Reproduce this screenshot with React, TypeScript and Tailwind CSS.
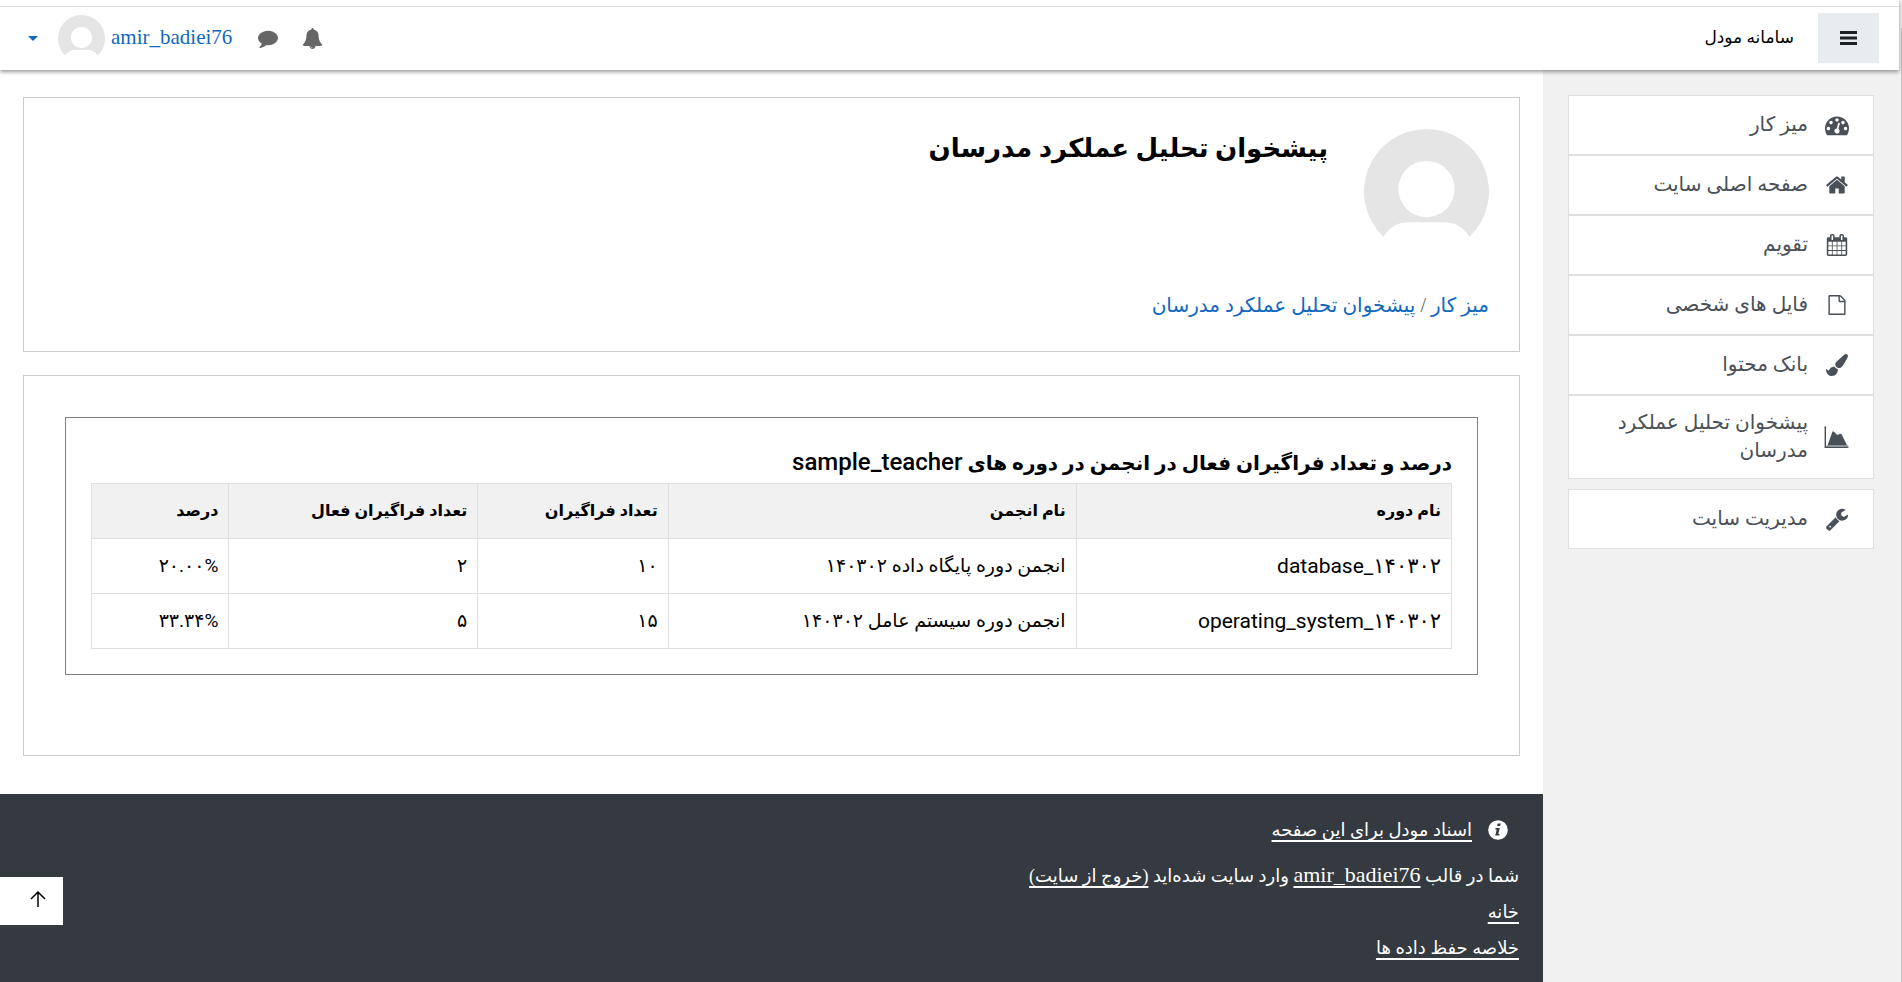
import React from "react";

type IconProps = { d: string; className?: string };

const Icon = ({ d, className }: IconProps) => (
  <svg viewBox="0 0 1792 1792" className={className} fill="currentColor" aria-hidden="true">
    <path d={d} />
  </svg>
);

const HOME =
  "M1472 992v480q0 26-19 45t-45 19h-384v-384h-256v384h-384q-26 0-45-19t-19-45v-480q0-1 .5-3t.5-3l575-474 575 474q1 2 1 6zm223-69l-62 74q-8 9-21 11h-3q-13 0-21-7l-692-577-692 577q-12 8-24 7-13-2-21-11l-62-74q-8-10-7-23.5t11-21.5l719-599q32-26 76-26t76 26l244 204v-195q0-14 9-23t23-9h192q14 0 23 9t9 23v408l219 182q10 8 11 21.5t-7 23.5z";
const GAUGE =
  "M384 1152q0-53-37.5-90.5t-90.5-37.5-90.5 37.5-37.5 90.5 37.5 90.5 90.5 37.5 90.5-37.5 37.5-90.5zm192-448q0-53-37.5-90.5t-90.5-37.5-90.5 37.5-37.5 90.5 37.5 90.5 90.5 37.5 90.5-37.5 37.5-90.5zm428 481l101-382q6-26-7.5-48.5t-38.5-29.5-48 6.5-30 39.5l-101 382q-60 5-107 43.5t-63 98.5q-20 77 20 146t117 89 146-20 89-117q16-60-6-117t-72-91zm660-33q0-53-37.5-90.5t-90.5-37.5-90.5 37.5-37.5 90.5 37.5 90.5 90.5 37.5 90.5-37.5 37.5-90.5zm-640-640q0-53-37.5-90.5t-90.5-37.5-90.5 37.5-37.5 90.5 37.5 90.5 90.5 37.5 90.5-37.5 37.5-90.5zm448 192q0-53-37.5-90.5t-90.5-37.5-90.5 37.5-37.5 90.5 37.5 90.5 90.5 37.5 90.5-37.5 37.5-90.5zm320 448q0 261-141 483-19 29-54 29h-1402q-35 0-54-29-141-221-141-483 0-182 71-348t191-286 286-191 348-71 348 71 286 191 191 286 71 348z";
const CALENDAR =
  "M192 1664h288v-288h-288v288zm352 0h320v-288h-320v288zm-352-352h288v-320h-288v320zm352 0h320v-320h-320v320zm-352-384h288v-288h-288v288zm736 736h320v-288h-320v288zm-384-736h320v-288h-320v288zm768 736h288v-288h-288v288zm-384-352h320v-320h-320v320zm-352-864v-288q0-13-9.5-22.5t-22.5-9.5h-64q-13 0-22.5 9.5t-9.5 22.5v288q0 13 9.5 22.5t22.5 9.5h64q13 0 22.5-9.5t9.5-22.5zm736 864h288v-320h-288v320zm-384-384h320v-288h-320v288zm384 0h288v-288h-288v288zm32-480v-288q0-13-9.5-22.5t-22.5-9.5h-64q-13 0-22.5 9.5t-9.5 22.5v288q0 13 9.5 22.5t22.5 9.5h64q13 0 22.5-9.5t9.5-22.5zm384-64v1280q0 52-38 90t-90 38h-1408q-52 0-90-38t-38-90v-1280q0-52 38-90t90-38h128v-96q0-66 47-113t113-47h64q66 0 113 47t47 113v96h384v-96q0-66 47-113t113-47h64q66 0 113 47t47 113v96h128q52 0 90 38t38 90z";
const FILE =
  "M1596 380q28 28 48 76t20 88v1152q0 40-28 68t-68 28h-1344q-40 0-68-28t-28-68v-1600q0-40 28-68t68-28h896q40 0 88 20t76 48zm-444-244v376h376q-10-29-22-41l-313-313q-12-12-41-22zm384 1528v-1024h-416q-40 0-68-28t-28-68v-416h-768v1536h1280z";
const BRUSH =
  "M1615 0q70 0 122.5 46.5t52.5 116.5q0 63-45 151-332 629-465 752-97 91-218 91-126 0-216.5-92.5t-90.5-219.5q0-128 92-212l638-579q59-54 130-54zm-909 1034q39 76 106.5 130t150.5 76l1 71q4 213-129.5 347t-348.5 134q-123 0-218-46.5t-152.5-127.5-86.5-183-29-220q7 5 41 30t62 44.5 59 36.5 46 17q41 0 55-37 25-66 57.5-112.5t69.5-76 88-47.5 103-25.5 125-10.5z";
const WRENCH =
  "M448 1472q0-26-19-45t-45-19-45 19-19 45 19 45 45 19 45-19 19-45zm644-420l-682 682q-37 37-90 37-52 0-91-37l-106-108q-38-36-38-90 0-53 38-91l681-681q39 98 114.5 173.5t173.5 114.5zm634-435q0 39-23 106-47 134-164.5 217.5t-258.5 83.5q-185 0-316.5-131.5t-131.5-316.5 131.5-316.5 316.5-131.5q58 0 121.5 16.5t107.5 46.5q16 11 16 28t-16 28l-293 169v224l193 107q5-3 79-48.5t135.5-81 70.5-35.5q15 0 23.5 10t8.5 25z";
const COMMENT =
  "M1792 896q0 174-120 321.5t-326 233-450 85.5q-70 0-145-8-198 175-460 242-49 14-114 22-17 2-30.5-9t-17.5-29v-1q-3-4-.5-12t2-10 4.5-9.5l6-9 7-8.5 8-9q7-8 31-34.5t34.5-38 31-39.5 32.5-51 27-59 26-76q-157-89-247.5-220t-90.5-281q0-130 71-248.5t191-204.5 286-136.5 348-50.5q244 0 450 85.5t326 233 120 321.5z";
const BELL =
  "M912 1696q0-16-16-16-59 0-101.5-42.5t-42.5-101.5q0-16-16-16t-16 16q0 73 51.5 124.5t124.5 51.5q16 0 16-16zm816-288q0 52-38 90t-90 38h-448q0 106-75 181t-181 75-181-75-75-181h-448q-52 0-90-38t-38-90q50-42 91-88t85-119.5 74.5-158.5 50-206 19.5-260q0-152 117-282.5t307-158.5q-8-19-8-39 0-40 28-68t68-28 68 28 28 68q0 20-8 39 190 28 307 158.5t117 282.5q0 139 19.5 260t50 206 74.5 158.5 85 119.5 91 88z";

const ChartIcon = () => (
  <svg viewBox="0 0 25 22" className="h-[22px] w-[25px]" fill="currentColor" aria-hidden="true">
    <path d="M0 1.500L1.300 0L2.600 1.500H2V20.300H23.500V19.500L25 21L23.500 22H.6V1.500Z" />
    <path d="M2.500 19.200H24V21H2.500Z" fill="#92969c" />
    <path d="M3.600 19.300L8.500 5.500Q9 4.800 9.700 5.600L13.200 9L16.300 7.800Q17.200 7.600 17.700 8.600L23 19.300Z" />
  </svg>
);

const Avatar = ({ className }: { className: string }) => (
  <svg viewBox="0 0 100 100" className={className} aria-hidden="true">
    <path
      fill="#e5e5e5"
      fillRule="evenodd"
      d="M50 0A50 50 0 0 1 84.500 86.200Q77 74.500 65 74.500H35Q23 74.500 15.500 86.200A50 50 0 0 1 50 0ZM50 25.500A22.500 22.500 0 1 0 50 70.500A22.500 22.500 0 1 0 50 25.500Z"
    />
  </svg>
);

const NAV = [
  { label: "میز کار", icon: <Icon d={GAUGE} className="h-6 w-6" /> },
  { label: "صفحه اصلی سایت", icon: <Icon d={HOME} className="h-6 w-6" /> },
  { label: "تقویم", icon: <Icon d={CALENDAR} className="h-[22px] w-[22px]" /> },
  { label: "فایل های شخصی", icon: <Icon d={FILE} className="h-5 w-5" /> },
  { label: "بانک محتوا", icon: <Icon d={BRUSH} className="h-[22px] w-[22px]" /> },
  { label: "پیشخوان تحلیل عملکرد مدرسان", icon: <ChartIcon /> },
];

const HEADS = ["نام دوره", "نام انجمن", "تعداد فراگیران", "تعداد فراگیران فعال", "درصد"];
const ROWS = [
  ["database_۱۴۰۳۰۲", "انجمن دوره پایگاه داده ۱۴۰۳۰۲", "۱۰", "۲", "۲۰.۰۰%"],
  ["operating_system_۱۴۰۳۰۲", "انجمن دوره سیستم عامل ۱۴۰۳۰۲", "۱۵", "۵", "۳۳.۳۴%"],
];

const NavItem = ({ label, icon }: { label: string; icon: React.ReactNode }) => (
  <li className="flex min-h-15 border border-[#dfdfdf] bg-white">
    <a href="#" className="flex w-full items-center gap-4 pt-3 pr-6 pb-[13px] pl-8 text-[#495057]">
      <span className="flex w-[25px] shrink-0 justify-center">{icon}</span>
      <span className="pb-px text-xl leading-7">{label}</span>
    </a>
  </li>
);

export default function App() {
  return (
    <div
      dir="rtl"
      className="relative flex min-h-screen flex-col bg-[#f1f1f1] font-['Liberation_Serif','DejaVu_Sans',serif] text-black"
    >
      <div className="absolute top-7 right-0 bottom-0 w-px bg-[#c1c1c1]" />
      <header className="relative z-10 mr-[3px] border-t-[6px] border-white bg-white shadow-[0_2px_4px_rgba(0,0,0,0.4)]">
        <div className="flex h-16 items-center border-t border-[#dfdfdf] pr-5 pb-px pl-7">
          <button type="button" aria-label="منو" className="flex h-[50px] w-[61px] items-center justify-center bg-[#e9ecef]">
            <svg viewBox="0 0 17 14" className="h-[14px] w-[17px]" fill="#1d2125" aria-hidden="true">
              <path d="M0 0h17v3H0zM0 5.500h17v3H0zM0 11h17v3H0z" />
            </svg>
          </button>
          <a href="#" className="mr-6 text-[17px]">سامانه مودل</a>
          <div className="mr-auto flex items-center text-[#666]">
            <button type="button" aria-label="اعلان‌ها" className="ml-6"><Icon d={BELL} className="h-[21px] w-[21px]" /></button>
            <button type="button" aria-label="پیام‌ها" className="ml-[26px]"><Icon d={COMMENT} className="h-5 w-5" /></button>
            <button type="button" className="flex items-center gap-[6px] text-[21px] text-[#1068bf]">
              <span dir="ltr">amir_badiei76</span>
              <Avatar className="h-[47px] w-[47px]" />
              <svg viewBox="0 0 10 5" className="mr-[14px] h-[5px] w-[10px]" fill="currentColor" aria-hidden="true">
                <path d="M0 0h10L5 5z" />
              </svg>
            </button>
          </div>
        </div>
      </header>

      <div className="flex grow">
        <aside className="w-[359px] shrink-0 pt-[25px] pr-7 pl-[25px]">
          <nav>
            <ul>{NAV.map((n) => <NavItem key={n.label} {...n} />)}</ul>
            <ul className="mt-[10px]">
              <NavItem label="مدیریت سایت" icon={<Icon d={WRENCH} className="h-6 w-6" />} />
            </ul>
          </nav>
        </aside>

        <div className="flex min-w-0 grow flex-col bg-white">
          <main className="px-[23px] pt-[27px] pb-[38px]">
            <section className="border border-[#ccc] px-[30px] pt-[31px] pb-8">
              <div className="flex h-[162px] gap-9">
                <Avatar className="h-[125px] w-[125px]" />
                <h1 className="text-[26px] leading-10 font-bold">پیشخوان تحلیل عملکرد مدرسان</h1>
              </div>
              <nav className="text-xl leading-7 text-[#666]">
                <a href="#" className="text-[#1068bf]">میز کار</a>
                {" / "}
                <a href="#" className="text-[#1068bf]">پیشخوان تحلیل عملکرد مدرسان</a>
              </nav>
            </section>

            <section className="mt-[23px] border border-[#ccc] px-[41px] pt-[41px] pb-20">
              <div className="border border-[#808080] px-[25px] pt-6 pb-[25px] font-[Roboto,'DejaVu_Sans',sans-serif]">
                <h2 className="text-xl leading-10 font-bold">
                  درصد و تعداد فراگیران فعال در انجمن در دوره های{" "}
                  <span className="text-2xl leading-10 font-medium">sample_teacher</span>
                </h2>
                <table className="w-full table-fixed border-collapse text-right">
                  <colgroup>
                    <col className="w-[27.6%]" />
                    <col className="w-[30%]" />
                    <col className="w-[14%]" />
                    <col className="w-[18.3%]" />
                    <col className="w-[10.1%]" />
                  </colgroup>
                  <thead>
                    <tr className="h-[55px] bg-[#f1f1f1]">
                      {HEADS.map((h) => <th key={h} className="border border-[#dfdfdf] px-[10px] text-base font-bold">{h}</th>)}
                    </tr>
                  </thead>
                  <tbody>
                    {ROWS.map((r) => (
                      <tr key={r[0]} className="h-[55px]">
                        {r.map((c, i) => (
                          <td key={i} className="border border-[#dfdfdf] px-[10px] text-[19px] leading-8">
                            {i === 0 ? (
                              <bdi dir="ltr" className="text-[21px]">{c}</bdi>
                            ) : (
                              <bdi dir={i === 4 ? "ltr" : "rtl"}>{c}</bdi>
                            )}
                          </td>
                        ))}
                      </tr>
                    ))}
                  </tbody>
                </table>
              </div>
            </section>
          </main>

          <footer className="relative grow bg-[#343a40] px-6 pt-[18px] text-lg leading-9 text-white">
            <p className="mb-[9px] flex items-center gap-4 pr-[11px]">
              <svg viewBox="0 0 20 20" className="h-5 w-5" aria-hidden="true">
                <circle cx="10" cy="10" r="9.800" fill="#fff" />
                <path fill="#343a40" d="M9.700 3.500h3l-.6 2.600h-3zM7.600 8h4.200l-1.500 6h1.300l-.5 1.600H7.200L8.700 9.500H7.200z" />
              </svg>
              <a href="#" className="underline decoration-2 underline-offset-4">اسناد مودل برای این صفحه</a>
            </p>
            <p>
              شما در قالب <a href="#" className="text-[22px] underline decoration-2 underline-offset-4">amir_badiei76</a> وارد سایت شده‌اید{" "}
              <a href="#" className="underline decoration-2 underline-offset-4">(خروج از سایت)</a>
            </p>
            <p><a href="#" className="underline decoration-2 underline-offset-4">خانه</a></p>
            <p><a href="#" className="underline decoration-2 underline-offset-4">خلاصه حفظ داده ها</a></p>
            <button type="button" aria-label="بازگشت به بالا" className="absolute top-[83px] left-0 flex h-12 w-[63px] items-center justify-center bg-white pb-1 pl-3 text-black">
              <svg viewBox="0 0 16 16" className="h-4 w-4" fill="none" stroke="currentColor" strokeWidth="1.500" aria-hidden="true">
                <path d="M8 16V1M1 8l7-7 7 7" />
              </svg>
            </button>
          </footer>
        </div>
      </div>
    </div>
  );
}
